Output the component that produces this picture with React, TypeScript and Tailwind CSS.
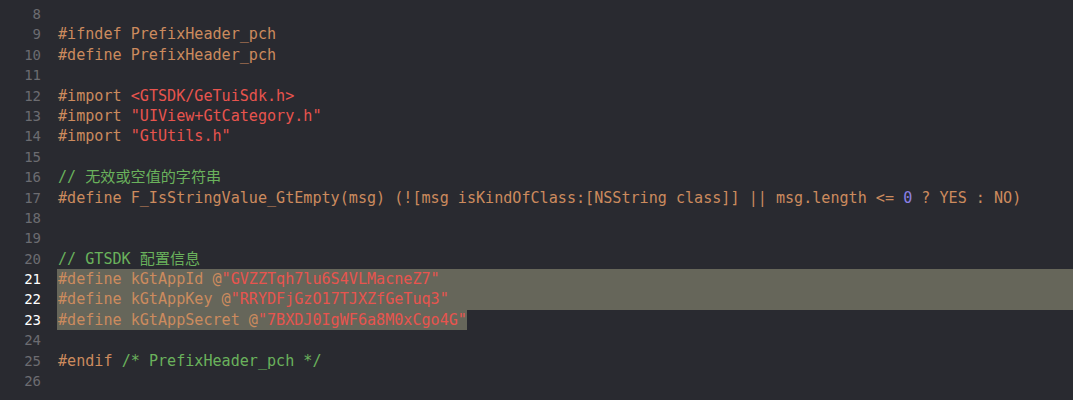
import React from "react";

const P = "text-[#cc8b5e]";
const S = "text-[#e8544e]";
const C = "text-[#6ab25c]";
const N = "text-[#8b80e6]";

type Seg = [string, string];
type Line = { n: number; segs: Seg[]; hl?: "full" | "text" };

const lines: Line[] = [
  { n: 8, segs: [] },
  { n: 9, segs: [[P, "#ifndef PrefixHeader_pch"]] },
  { n: 10, segs: [[P, "#define PrefixHeader_pch"]] },
  { n: 11, segs: [] },
  { n: 12, segs: [[P, "#import "], [S, "<GTSDK/GeTuiSdk.h>"]] },
  { n: 13, segs: [[P, "#import "], [S, "\"UIView+GtCategory.h\""]] },
  { n: 14, segs: [[P, "#import "], [S, "\"GtUtils.h\""]] },
  { n: 15, segs: [] },
  { n: 16, segs: [[C, "// 无效或空值的字符串"]] },
  {
    n: 17,
    segs: [
      [P, "#define F_IsStringValue_GtEmpty(msg) (![msg isKindOfClass:[NSString class]] || msg.length <= "],
      [N, "0"],
      [P, " ? YES : NO)"],
    ],
  },
  { n: 18, segs: [] },
  { n: 19, segs: [] },
  { n: 20, segs: [[C, "// GTSDK 配置信息"]] },
  { n: 21, segs: [[P, "#define kGtAppId @"], [S, "\"GVZZTqh7lu6S4VLMacneZ7\""]], hl: "full" },
  { n: 22, segs: [[P, "#define kGtAppKey @"], [S, "\"RRYDFjGzO17TJXZfGeTuq3\""]], hl: "full" },
  { n: 23, segs: [[P, "#define kGtAppSecret @"], [S, "\"7BXDJ0IgWF6a8M0xCgo4G\""]], hl: "text" },
  { n: 24, segs: [] },
  { n: 25, segs: [[P, "#endif "], [C, "/* PrefixHeader_pch */"]] },
  { n: 26, segs: [] },
];

export default function App() {
  return (
    <div
      className="w-[1073px] h-[400px] overflow-hidden bg-[#292a30] pt-[4px]"
      style={{ fontFamily: '"DejaVu Sans Mono", "Noto Sans CJK SC", monospace' }}
    >
      {lines.map((l) => (
        <div key={l.n} className="flex h-[20.4px] leading-[20.4px] whitespace-pre">
          <div
            className={`w-[41px] shrink-0 text-right text-[14px] ${
              l.hl ? "text-[#ffffff]" : "text-[#6c6c71]"
            }`}
          >
            {l.n}
          </div>
          <div className="w-[16px] shrink-0" />
          <div className={`text-[15.1px] ${l.hl === "full" ? "flex-1 bg-[#66665a]" : ""}`}>
            <span className={`pl-[1px] ${l.hl === "text" ? "inline-block bg-[#66665a]" : ""}`}>
              {l.segs.map((s, i) => (
                <span key={i} className={s[0]}>
                  {s[1]}
                </span>
              ))}
            </span>
          </div>
        </div>
      ))}
    </div>
  );
}
